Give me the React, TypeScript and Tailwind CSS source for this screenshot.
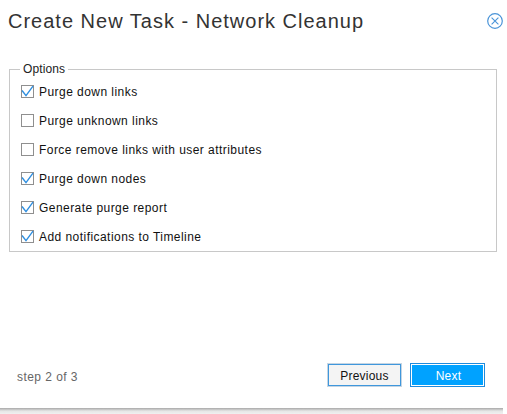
import React from 'react'

const options = [
  { label: 'Purge down links', checked: true },
  { label: 'Purge unknown links', checked: false },
  { label: 'Force remove links with user attributes', checked: false },
  { label: 'Purge down nodes', checked: true },
  { label: 'Generate purge report', checked: true },
  { label: 'Add notifications to Timeline', checked: true },
]

function CheckBox({ checked }: { checked: boolean }) {
  return (
    <span className="w-[13px] h-[13px] shrink-0 border border-[#8f8f8f] bg-white relative">
      {checked && (
        <svg className="absolute left-[-1px] top-[-1px]" width="13" height="13" viewBox="0 0 13 13" fill="none">
          <path d="M1 5.5 L5 10.6 L12 1.2" stroke="#2f8fe0" strokeWidth="1.4" />
        </svg>
      )}
    </span>
  )
}

export default function App() {
  return (
    <div className="w-[507px] h-[414px] bg-white relative overflow-hidden font-['Liberation_Sans',Arial,sans-serif]">
      <div className="w-[503px] h-[408px] bg-white flex flex-col">
        <div className="flex items-center justify-between h-[42px] pl-2 pr-0">
          <h1 className="text-[20px] leading-[42px] tracking-[1px] text-[#333333]">Create New Task - Network Cleanup</h1>
          <svg className="mr-0" width="16" height="16" viewBox="0 0 16 16" fill="none" stroke="#4a94d8">
            <circle cx="8" cy="8" r="7.3" strokeWidth="1.2" />
            <path d="M4.6 4.6 L11.4 11.4 M11.4 4.6 L4.6 11.4" strokeWidth="1.1" />
          </svg>
        </div>
        <fieldset className="ml-[9px] mt-[20px] w-[488px] h-[190px] border border-[#c8c8c8] pl-[11px] pb-0">
          <legend className="ml-[-1px] px-[3px] text-[12px] leading-[14px] tracking-[0.1px] text-[#222222]">Options</legend>
          <div className="flex flex-col gap-[12px] mt-[7px]">
            {options.map(o => (
              <label key={o.label} className="flex items-center gap-[5px] h-[17px] text-[12px] tracking-[0.45px] text-[#111111]">
                <CheckBox checked={o.checked} />
                {o.label}
              </label>
            ))}
          </div>
        </fieldset>
        <div className="mt-auto flex items-center justify-between h-[24px] mb-[21px] pl-[17px] pr-[18px]">
          <span className="pt-[3px] text-[12px] tracking-[0.45px] text-[#666666]">step 2 of 3</span>
          <div className="flex gap-[8px]">
            <button type="button" className="w-[75px] h-[24px] pt-[1px] bg-[#f4f4f4] border-2 border-[#c5d5e3] outline outline-1 outline-offset-[-2px] outline-[#3f97dc] text-[12px] tracking-[0.2px] text-[#111111]">
              Previous
            </button>
            <button type="button" className="w-[75px] h-[24px] pt-[1px] pl-[2px] bg-[#00a2ff] border border-[#1f8bdc] outline outline-1 outline-offset-[-2px] outline-white text-[12px] tracking-[0.2px] text-white">
              Next
            </button>
          </div>
        </div>
      </div>
      <div className="h-[6px] w-[503px] bg-gradient-to-b from-[#a8a8a8] via-[#e6e6e6] to-[#f0f0f0]" />
    </div>
  )
}
